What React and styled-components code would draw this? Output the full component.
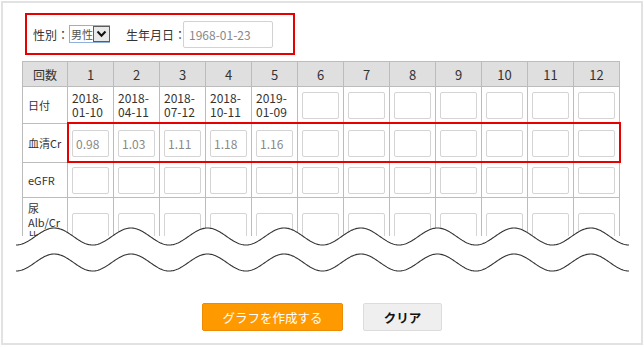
import React from 'react'
import styled, { createGlobalStyle } from 'styled-components'

const GlobalStyle = createGlobalStyle`
  body {
    margin: 0;
    background: #fff;
    font-family: "Noto Sans CJK JP", "Noto Sans", sans-serif;
    color: #333;
  }
`

const Frame = styled.div`
  box-sizing: border-box;
  width: 642px;
  height: 344px;
  margin: 1px 0 0 1px;
  border: 2px solid #e2e2e2;
  display: flex;
  flex-direction: column;
`

const FilterBox = styled.div`
  box-sizing: border-box;
  width: 270px;
  height: 42px;
  margin: 10px 0 0 22px;
  padding-left: 6px;
  border: 2px solid #e60000;
  display: flex;
  align-items: center;
  font-size: 12px;
`

const Label = styled.span`
  color: #333;
  margin-left: ${({ gap }) => gap || 0}px;
  white-space: nowrap;
`

const SelectBox = styled.div`
  box-sizing: border-box;
  width: 41px;
  height: 18px;
  display: flex;
  align-items: center;
  justify-content: space-between;
  border: 1px solid #8fb2dc;
  padding-left: 1px;
  font-size: 11px;
  white-space: nowrap;
  color: #555;
  background: #fff;
`

const Arrow = styled.span`
  box-sizing: border-box;
  flex: none;
  width: 17px;
  height: 16px;
  border: 1px solid #5c5c5c;
  background: #e9e9e9;
  display: flex;
  align-items: center;
  justify-content: center;
`

const DateInput = styled.div`
  box-sizing: border-box;
  width: 90px;
  height: 27px;
  margin-left: -3px;
  padding-left: 5px;
  border: 1px solid #d2d2d2;
  border-radius: 2px;
  display: flex;
  align-items: center;
  color: #888;
  font-size: 12px;
`

const TableArea = styled.div`
  position: relative;
  height: 232px;
  margin-top: 6px;
`

const TableClip = styled.div`
  height: 175px;
  overflow: hidden;
  margin-left: 19px;
`

const Grid = styled.table`
  width: 597px;
  table-layout: fixed;
  border-collapse: collapse;
  font-size: 12px;
`

const Head = styled.th`
  height: 24px;
  padding: 0;
  background: #dfdfdf;
  border: 1px solid #bcbcbc;
  font-weight: normal;
  color: #333;
  text-align: center;
  font-size: ${({ small }) => (small ? 12 : 13)}px;
`

const RowLabel = styled.td`
  height: ${({ h }) => h}px;
  padding: ${({ wrap }) => (wrap ? '3px 0 0 5px' : '0 0 0 5px')};
  border: 1px solid #bcbcbc;
  font-size: 11px;
  line-height: 14px;
  vertical-align: ${({ wrap }) => (wrap ? 'top' : 'middle')};
  white-space: ${({ wrap }) => (wrap ? 'normal' : 'nowrap')};
  color: #333;
`

const Cell = styled.td`
  height: ${({ h }) => h}px;
  padding: 0 4px;
  border: 1px solid #bcbcbc;
  line-height: 14px;
  vertical-align: middle;
  color: #333;
`

const Field = styled.input`
  box-sizing: border-box;
  display: block;
  width: 100%;
  height: 27px;
  margin: 0;
  padding: 0 0 0 3px;
  border: 1px solid #d4d4d4;
  border-radius: 2px;
  background: #fff;
  font-family: inherit;
  font-size: 12px;
  color: #888;
  outline: none;
`

const Highlight = styled.div`
  position: absolute;
  left: 64px;
  top: 61px;
  width: 554px;
  height: 41px;
  box-sizing: border-box;
  border: 2px solid #e60000;
  pointer-events: none;
`

const Waves = styled.svg`
  position: absolute;
  left: 12px;
  top: 165px;
`

const ButtonRow = styled.div`
  display: flex;
  justify-content: center;
  gap: 20px;
  padding-top: 10px;
`

const Button = styled.button`
  box-sizing: border-box;
  width: ${({ w }) => w}px;
  height: 28px;
  border-radius: 2px;
  font-family: inherit;
  font-size: 12.5px;
  cursor: pointer;
  background: ${({ primary }) => (primary ? '#ff9900' : '#efefef')};
  border: 1px solid ${({ primary }) => (primary ? '#ec8c05' : '#dcdcdc')};
  color: ${({ primary }) => (primary ? '#fff' : '#111')};
  font-weight: ${({ primary }) => (primary ? 'normal' : 'bold')};
`

const dates = ['2018-01-10', '2018-04-11', '2018-07-12', '2018-10-11', '2019-01-09']
const creatinine = ['0.98', '1.03', '1.11', '1.18', '1.16']
const cols = Array.from({ length: 12 }, (_, i) => i)

const wave = (offset) => {
  let d = ''
  for (let x = 0; x <= 613; x += 1) {
    const y = offset + 10.5 + 8.5 * Math.cos((2 * Math.PI * x) / 76.625)
    d += (x ? 'L' : 'M') + (x + 1) + ' ' + y.toFixed(2)
  }
  return d
}

export default function App() {
  const top = wave(0)
  return (
    <>
      <GlobalStyle />
      <Frame>
        <FilterBox>
          <Label>性別：</Label>
          <SelectBox>
            男性
            <Arrow>
              <svg width="11" height="8" viewBox="0 0 11 8">
                <path d="M1.5 1.5 L5.5 5.8 L9.5 1.5" fill="none" stroke="#111" strokeWidth="2" />
              </svg>
            </Arrow>
          </SelectBox>
          <Label gap={16}>生年月日：</Label>
          <DateInput>1968-01-23</DateInput>
        </FilterBox>

        <TableArea>
          <TableClip>
            <Grid>
              <colgroup>
                <col style={{ width: 45 }} />
                {cols.map((i) => <col key={i} style={{ width: 46 }} />)}
              </colgroup>
              <thead>
                <tr>
                  <Head small>回数</Head>
                  {cols.map((i) => <Head key={i}>{i + 1}</Head>)}
                </tr>
              </thead>
              <tbody>
                <tr>
                  <RowLabel h={36}>日付</RowLabel>
                  {cols.map((i) => (
                    <Cell key={i} h={36}>
                      {dates[i] ? dates[i] : <Field readOnly value="" />}
                    </Cell>
                  ))}
                </tr>
                <tr>
                  <RowLabel h={38}>血清Cr</RowLabel>
                  {cols.map((i) => (
                    <Cell key={i} h={38}>
                      <Field readOnly value={creatinine[i] || ''} />
                    </Cell>
                  ))}
                </tr>
                <tr>
                  <RowLabel h={34}>eGFR</RowLabel>
                  {cols.map((i) => (
                    <Cell key={i} h={34}>
                      <Field readOnly value="" />
                    </Cell>
                  ))}
                </tr>
                <tr>
                  <RowLabel h={54} wrap>尿Alb/Cr比</RowLabel>
                  {cols.map((i) => (
                    <Cell key={i} h={54}>
                      <Field readOnly value="" />
                    </Cell>
                  ))}
                </tr>
              </tbody>
            </Grid>
          </TableClip>
          <Highlight />
          <Waves width="616" height="67" viewBox="0 0 616 67">
            <path d={top + ' L614 67 L1 67 Z'} fill="#fff" />
            <path d={top} fill="none" stroke="#333" strokeWidth="1.1" />
            <path d={wave(26)} fill="none" stroke="#333" strokeWidth="1.1" />
          </Waves>
        </TableArea>

        <ButtonRow>
          <Button primary w={141}>グラフを作成する</Button>
          <Button w={79}>クリア</Button>
        </ButtonRow>
      </Frame>
    </>
  )
}
